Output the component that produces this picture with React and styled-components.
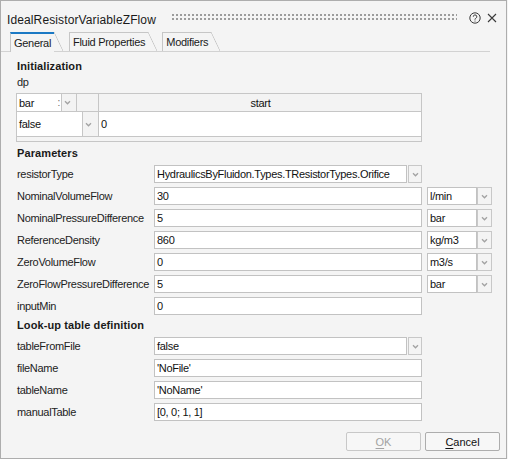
import React from "react";
import styled, { createGlobalStyle } from "styled-components";

const GlobalStyle = createGlobalStyle`
  html, body {
    margin: 0;
    padding: 0;
    background: #f4f4f4;
  }
  body {
    font-family: "Liberation Sans", Arial, sans-serif;
  }
`;

const Window = styled.div`
  box-sizing: border-box;
  width: 507px;
  height: 459px;
  border: 1px solid #adadad;
  background: #f4f4f4;
  color: #1e1e1e;
  font-size: 11px;
  letter-spacing: -0.3px;
  display: flex;
  flex-direction: column;
`;

const TitleBar = styled.div`
  box-sizing: border-box;
  height: 31px;
  padding: 7px 9px 0 6px;
  display: flex;
  align-items: center;
`;

const Title = styled.div`
  font-size: 12px;
  letter-spacing: 0.12px;
  color: #1a1a1a;
  line-height: 16px;
`;

const Dots = styled.div`
  flex: 1;
  height: 8px;
  margin: 0 12px 6px 15px;
  background: radial-gradient(circle, #9c9c9c 0.8px, transparent 1.1px) 0 0 / 4px 4px;
`;

const IconButton = styled.div`
  width: ${(p) => p.size}px;
  height: ${(p) => p.size}px;
  margin-left: ${(p) => p.gap}px;
  margin-bottom: 5px;
  display: flex;
  align-items: center;
  justify-content: center;
  svg {
    display: block;
  }
`;

const TabStrip = styled.div`
  box-sizing: border-box;
  height: 20px;
  margin-right: 16px;
  padding-left: 9px;
  display: flex;
  align-items: flex-start;
  border-bottom: 1px solid #d2d2d2;
`;

const Tab = styled.div`
  position: relative;
  box-sizing: border-box;
  height: ${(p) => (p.active ? 20 : 19)}px;
  margin-right: ${(p) => p.gap}px;
  padding: 0 3px 0 3px;
  display: flex;
  align-items: center;
  border-left: 1px solid #c6c6c6;
  border-top: ${(p) => (p.active ? "2px solid #1b79c4" : "1px solid #c6c6c6")};
  background: #f4f4f4;
  color: #1a1a1a;
  z-index: ${(p) => (p.active ? 1 : 0)};
  &::after {
    content: "";
    position: absolute;
    left: 100%;
    top: ${(p) => (p.active ? -2 : -1)}px;
    bottom: ${(p) => (p.active ? 1 : 0)}px;
    width: 9px;
    background: linear-gradient(
      to top right,
      transparent calc(50% - 0.7px),
      #c6c6c6 50%,
      transparent calc(50% + 0.7px)
    );
  }
`;

const Body = styled.div`
  display: flex;
  flex-direction: column;
  padding-left: 16px;
`;

const SectionTitle = styled.div`
  font-weight: bold;
  letter-spacing: 0.1px;
  line-height: 14px;
  margin-top: ${(p) => p.top}px;
  color: #1a1a1a;
`;

const SubLabel = styled.div`
  line-height: 14px;
  margin-top: 2px;
`;

const DpTable = styled.div`
  box-sizing: border-box;
  width: 406px;
  margin: 4px 0 0 -1px;
  padding-bottom: 4px;
  border: 1px solid #c6c6c6;
`;

const DpRow = styled.div`
  display: grid;
  grid-template-columns: ${(p) => p.cols};
  height: ${(p) => p.h}px;
  box-sizing: border-box;
  border-bottom: 1px solid #c6c6c6;
`;

const DpCell = styled.div`
  box-sizing: border-box;
  display: flex;
  align-items: center;
  justify-content: ${(p) => (p.center ? "center" : "flex-start")};
  padding: 0 1px 0 2px;
  border-right: ${(p) => (p.last ? "none" : "1px solid #c6c6c6")};
  background: ${(p) => (p.white ? "#ffffff" : "#f3f3f3")};
  color: #111;
`;

const Grip = styled.span`
  margin-left: auto;
  color: #6a6a6a;
  font-size: 10px;
`;

const Rows = styled.div`
  display: flex;
  flex-direction: column;
  gap: 4px;
  margin-top: 5px;
`;

const Row = styled.div`
  display: flex;
  align-items: center;
  height: 18px;
`;

const Label = styled.div`
  width: 137px;
  flex-shrink: 0;
  color: #222;
`;

const Field = styled.div`
  box-sizing: border-box;
  width: ${(p) => p.w || 268}px;
  height: 18px;
  padding-left: 2px;
  display: flex;
  align-items: center;
  background: #fff;
  border: 1px solid #c2c2c2;
  color: #111;
  white-space: nowrap;
  overflow: hidden;
`;

const Select = styled.div`
  display: flex;
  width: ${(p) => p.w}px;
  margin-left: ${(p) => p.ml || 0}px;
  gap: ${(p) => p.gap || 0}px;
  ${Field} {
    flex: 1;
    width: auto;
  }
`;

const ArrowBox = styled.div`
  box-sizing: border-box;
  width: ${(p) => p.w || 15}px;
  height: ${(p) => p.h || 18}px;
  display: flex;
  align-items: center;
  justify-content: center;
  border: ${(p) => (p.bare ? "none" : "1px solid #c8c8c8")};
  background: #f4f4f4;
`;

const Footer = styled.div`
  display: flex;
  justify-content: flex-end;
  gap: 4px;
  margin-top: 11px;
  padding-right: 6px;
`;

const Button = styled.div`
  box-sizing: border-box;
  width: 75px;
  height: 19px;
  display: flex;
  align-items: center;
  justify-content: center;
  border: 1px solid ${(p) => (p.disabled ? "#c8c8c8" : "#adadad")};
  border-radius: 2px;
  background: #f7f7f7;
  color: ${(p) => (p.disabled ? "#a3a3a3" : "#111")};
  letter-spacing: 0;
  u {
    text-decoration-thickness: 1px;
    text-underline-offset: 2px;
  }
`;

const Chevron = () => (
  <svg width="7" height="5" viewBox="0 0 7 5">
    <path d="M1 1.2 L3.5 3.8 L6 1.2" fill="none" stroke="#a2a2a2" strokeWidth="1.3" />
  </svg>
);

const HelpIcon = () => (
  <svg width="12" height="12" viewBox="0 0 12 12">
    <circle cx="6" cy="6" r="5.2" fill="none" stroke="#3a3a3a" strokeWidth="1" />
    <path
      d="M4.3 4.7a1.75 1.75 0 1 1 2.5 1.55c-.55.3-.8.6-.8 1.2v.3"
      fill="none"
      stroke="#3a3a3a"
      strokeWidth="1"
    />
    <circle cx="6" cy="9" r="0.6" fill="#3a3a3a" />
  </svg>
);

const CloseIcon = () => (
  <svg width="10" height="10" viewBox="0 0 10 10">
    <path d="M1 1 L9 9 M9 1 L1 9" stroke="#3a3a3a" strokeWidth="1.1" />
  </svg>
);

const params = [
  { label: "NominalVolumeFlow", value: "30", unit: "l/min" },
  { label: "NominalPressureDifference", value: "5", unit: "bar" },
  { label: "ReferenceDensity", value: "860", unit: "kg/m3" },
  { label: "ZeroVolumeFlow", value: "0", unit: "m3/s" },
  { label: "ZeroFlowPressureDifference", value: "5", unit: "bar" },
  { label: "inputMin", value: "0" },
];

const tableParams = [
  { label: "fileName", value: "'NoFile'" },
  { label: "tableName", value: "'NoName'" },
  { label: "manualTable", value: "[0, 0; 1, 1]" },
];

const App = () => {
  return (
    <>
      <GlobalStyle />
      <Window>
        <TitleBar>
          <Title>IdealResistorVariableZFlow</Title>
          <Dots />
          <IconButton size={12} gap={0}>
            <HelpIcon />
          </IconButton>
          <IconButton size={10} gap={6}>
            <CloseIcon />
          </IconButton>
        </TitleBar>

        <TabStrip>
          <Tab active gap={15}>General</Tab>
          <Tab gap={14}>Fluid Properties</Tab>
          <Tab gap={0}>Modifiers</Tab>
        </TabStrip>

        <Body>
          <SectionTitle top={7}>Initialization</SectionTitle>
          <SubLabel>dp</SubLabel>
          <DpTable>
            <DpRow cols="45px 15px 22px 1fr" h={18}>
              <DpCell white>
                bar<Grip>:</Grip>
              </DpCell>
              <DpCell>
                <Chevron />
              </DpCell>
              <DpCell />
              <DpCell center last>
                start
              </DpCell>
            </DpRow>
            <DpRow cols="66px 16px 1fr" h={25}>
              <DpCell white>false</DpCell>
              <DpCell>
                <Chevron />
              </DpCell>
              <DpCell white last>
                0
              </DpCell>
            </DpRow>
          </DpTable>

          <SectionTitle top={4}>Parameters</SectionTitle>
          <Rows>
            <Row>
              <Label>resistorType</Label>
              <Select w={268} gap={1}>
                <Field>HydraulicsByFluidon.Types.TResistorTypes.Orifice</Field>
                <ArrowBox w={14}>
                  <Chevron />
                </ArrowBox>
              </Select>
            </Row>
            {params.map((p) => (
              <Row key={p.label}>
                <Label>{p.label}</Label>
                <Field>{p.value}</Field>
                {p.unit && (
                  <Select w={65} ml={5}>
                    <Field>{p.unit}</Field>
                    <ArrowBox>
                      <Chevron />
                    </ArrowBox>
                  </Select>
                )}
              </Row>
            ))}
          </Rows>

          <SectionTitle top={3}>Look-up table definition</SectionTitle>
          <Rows>
            <Row>
              <Label>tableFromFile</Label>
              <Select w={268} gap={1}>
                <Field>false</Field>
                <ArrowBox w={14}>
                  <Chevron />
                </ArrowBox>
              </Select>
            </Row>
            {tableParams.map((p) => (
              <Row key={p.label}>
                <Label>{p.label}</Label>
                <Field>{p.value}</Field>
              </Row>
            ))}
          </Rows>
        </Body>

        <Footer>
          <Button disabled>
            <span>
              <u>O</u>K
            </span>
          </Button>
          <Button>
            <span>
              <u>C</u>ancel
            </span>
          </Button>
        </Footer>
      </Window>
    </>
  );
};

export default App;
